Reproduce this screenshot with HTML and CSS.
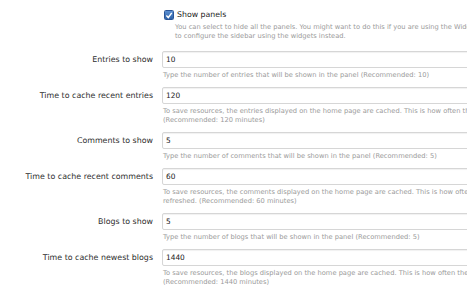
FILE: index.html
```html
<!DOCTYPE html>
<html>
<head>
<meta charset="utf-8">
<link rel="stylesheet" href="styles.css">
</head>
<body>
<div class="form">
  <div class="row check-row">
    <div class="label"></div>
    <div class="field">
      <label class="check"><span class="box"><svg width="9" height="9" viewBox="0 0 9 9"><path d="M1.5 4.5 L3.7 6.8 L7.6 1.6" fill="none" stroke="#fff" stroke-width="1.6"/></svg></span>Show panels</label>
      <p class="help">You can select to hide all the panels. You might want to do this if you are using the Widgets<br>to configure the sidebar using the widgets instead.</p>
    </div>
  </div>
  <div class="row">
    <div class="label">Entries to show</div>
    <div class="field">
      <div class="input">10</div>
      <p class="help">Type the number of entries that will be shown in the panel (Recommended: 10)</p>
    </div>
  </div>
  <div class="row">
    <div class="label">Time to cache recent entries</div>
    <div class="field">
      <div class="input">120</div>
      <p class="help">To save resources, the entries displayed on the home page are cached. This is how often they<br>(Recommended: 120 minutes)</p>
    </div>
  </div>
  <div class="row">
    <div class="label">Comments to show</div>
    <div class="field">
      <div class="input">5</div>
      <p class="help">Type the number of comments that will be shown in the panel (Recommended: 5)</p>
    </div>
  </div>
  <div class="row">
    <div class="label">Time to cache recent comments</div>
    <div class="field">
      <div class="input">60</div>
      <p class="help">To save resources, the comments displayed on the home page are cached. This is how often<br>refreshed. (Recommended: 60 minutes)</p>
    </div>
  </div>
  <div class="row">
    <div class="label">Blogs to show</div>
    <div class="field">
      <div class="input">5</div>
      <p class="help">Type the number of blogs that will be shown in the panel (Recommended: 5)</p>
    </div>
  </div>
  <div class="row">
    <div class="label">Time to cache newest blogs</div>
    <div class="field">
      <div class="input">1440</div>
      <p class="help">To save resources, the blogs displayed on the home page are cached. This is how often the<br>(Recommended: 1440 minutes)</p>
    </div>
  </div>
</div>
</body>
</html>
```
FILE: styles.css
```css
html, body {
  margin: 0;
  padding: 0;
  background: #fff;
  overflow: hidden;
}
body {
  width: 467px;
  height: 300px;
  font-family: "DejaVu Sans", Verdana, sans-serif;
}
.form {
  padding-top: 9px;
  display: flex;
  flex-direction: column;
  width: 467px;
  overflow: hidden;
}
.row {
  display: grid;
  grid-template-columns: 153px 400px;
  column-gap: 9px;
  margin-bottom: 7px;
}
.check-row {
  margin-bottom: 10px;
}
.label {
  text-align: right;
  font-size: 7.9px;
  color: #2e2e2e;
  line-height: 17px;
  white-space: nowrap;
}
.check {
  display: flex;
  align-items: center;
  gap: 3px;
  font-size: 7.8px;
  color: #222;
  line-height: 12px;
  margin-left: 2px;
}
.box {
  width: 8px;
  height: 8px;
  border-radius: 1.5px;
  background: linear-gradient(#5b8fd1, #2f62a8);
  border: 0.5px solid #2a5597;
  display: flex;
  align-items: center;
  justify-content: center;
}
.box svg { display: block; }
.input {
  height: 15px;
  border: 1px solid #d6d6d6;
  border-radius: 2px;
  box-shadow: inset 0 1px 1px rgba(0,0,0,0.06);
  font-size: 7.4px;
  line-height: 15px;
  padding-left: 3px;
  color: #222;
}
.help {
  margin: 3px 0 0 1px;
  font-size: 6.7px;
  line-height: 9px;
  color: #9a9a9a;
  white-space: nowrap;
}
.check-row .help {
  margin-top: 1.5px;
  margin-left: 13px;
}
```
